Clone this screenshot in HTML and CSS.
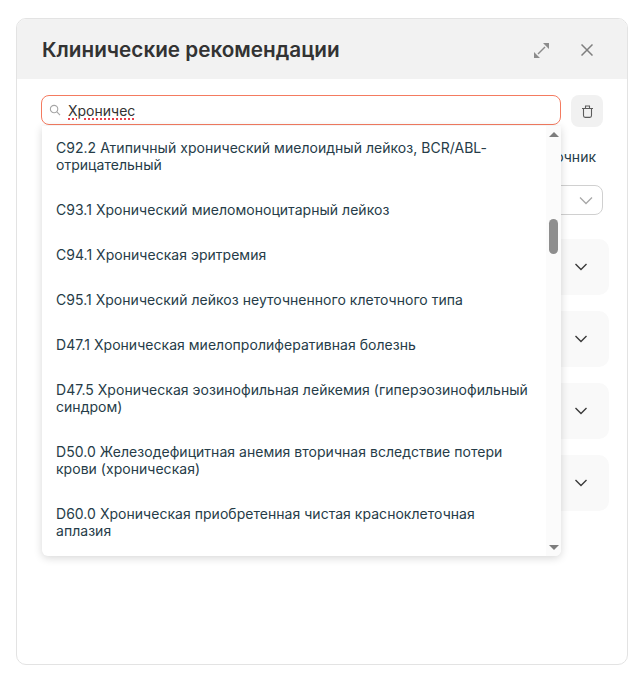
FILE: index.html
```html
<!DOCTYPE html>
<html lang="ru">
<head>
<meta charset="utf-8">
<title>Клинические рекомендации</title>
<link rel="stylesheet" href="styles.css">
</head>
<body>
<section class="card">
  <header class="head">
    <h1 class="title">Клинические рекомендации</h1>
    <div class="head-actions">
      <svg class="ico" width="15" height="15" viewBox="0 0 15 15" fill="none" stroke="#8c8c8c" stroke-width="1.5"><path d="M4 11l7-7"/><path d="M9 0h6v6zM0 9v6h6z" fill="#8c8c8c" stroke="none"/></svg>
      <svg class="ico" width="12" height="12" viewBox="0 0 12 12" fill="none" stroke="#7f7f7f" stroke-width="1.5"><path d="M.5.5l11 11M11.500.5l-11 11"/></svg>
    </div>
  </header>
  <div class="body">
    <div class="search-row">
      <div class="search-wrap">
        <div class="search">
          <svg width="12" height="12" viewBox="0 0 13 13" fill="none" stroke="#a6a6a6" stroke-width="1.2"><circle cx="5.500" cy="5.500" r="4"/><path d="M8.500 8.500 12 12"/></svg>
          <span class="query">Хроничес</span>
        </div>
        <div class="dropdown">
          <ul class="list">
            <li>C92.2 Атипичный хронический миелоидный лейкоз, BCR/ABL-отрицательный</li>
            <li>C93.1 Хронический миеломоноцитарный лейкоз</li>
            <li>C94.1 Хроническая эритремия</li>
            <li>C95.1 Хронический лейкоз неуточненного клеточного типа</li>
            <li>D47.1 Хроническая миелопролиферативная болезнь</li>
            <li>D47.5 Хроническая эозинофильная лейкемия (гиперэозинофильный синдром)</li>
            <li>D50.0 Железодефицитная анемия вторичная вследствие потери крови (хроническая)</li>
            <li>D60.0 Хроническая приобретенная чистая красноклеточная аплазия</li>
          </ul>
          <div class="scrollbar">
            <span class="arrow up"></span>
            <span class="thumb"></span>
            <span class="arrow down"></span>
          </div>
        </div>
      </div>
      <button class="trash" type="button" aria-label="Очистить">
        <svg width="11" height="13" viewBox="0 0 11 13" fill="none" stroke="#5c5c5c" stroke-width="1.1"><path d="M0 3.500h11M3.500 3.500V1h4v2.500M1.500 4v6.500c0 1 .6 1.900 1.600 1.900h4.800c1 0 1.600-.9 1.600-1.900V4"/></svg>
      </button>
    </div>
    <div class="label">Справочник</div>
    <div class="select">
      <svg width="16" height="9" viewBox="0 0 16 9" fill="none" stroke="#a8a8a8" stroke-width="1.3"><path d="M2 1.500 8 7.500l6-6"/></svg>
    </div>
    <div class="accordions">
      <div class="acc"><svg width="14" height="8" viewBox="0 0 14 8" fill="none" stroke="#3a3a3a" stroke-width="1.4"><path d="M1.500 1 7 6.500 12.500 1"/></svg></div>
      <div class="acc"><svg width="14" height="8" viewBox="0 0 14 8" fill="none" stroke="#3a3a3a" stroke-width="1.4"><path d="M1.500 1 7 6.500 12.500 1"/></svg></div>
      <div class="acc"><svg width="14" height="8" viewBox="0 0 14 8" fill="none" stroke="#3a3a3a" stroke-width="1.4"><path d="M1.500 1 7 6.500 12.500 1"/></svg></div>
      <div class="acc"><svg width="14" height="8" viewBox="0 0 14 8" fill="none" stroke="#3a3a3a" stroke-width="1.4"><path d="M1.500 1 7 6.500 12.500 1"/></svg></div>
    </div>
  </div>
</section>
</body>
</html>
```

FILE: styles.css
```css
* { box-sizing: border-box; }
html, body { margin: 0; background: #fff; }
body {
  width: 642px;
  height: 682px;
  padding: 18px 14px 17px 16px;
  font-family: Inter, "Noto Sans", sans-serif;
  color: #2f3a40;
  overflow: hidden;
}
.card {
  height: 647px;
  border: 1px solid #e3e3e3;
  border-radius: 10px;
  overflow: hidden;
  background: #fff;
}
.head {
  height: 60px;
  background: #f2f2f2;
  display: flex;
  align-items: center;
  justify-content: space-between;
  padding: 2px 34px 0 25px;
}
.title {
  margin: 0;
  font-size: 20.7px;
  line-height: 26px;
  font-weight: 600;
  color: #333;
}
.head-actions { display: flex; align-items: center; gap: 32px; }
.ico { display: block; }
.body { padding: 16px 24px 0 24px; }
.search-row { display: flex; gap: 10px; align-items: flex-start; }
.search-wrap { position: relative; flex: 1; }
.search {
  height: 30px;
  border: 1px solid #f47b60;
  border-radius: 8px;
  display: flex;
  align-items: center;
  gap: 7px;
  padding: 0 7px;
  background: #fff;
}
.query {
  font-size: 14px;
  color: #333;
  text-decoration: underline dotted #e8404a 1.5px;
  text-underline-offset: 3px;
}
.dropdown {
  position: absolute;
  top: 31px;
  left: 1px;
  right: 0;
  height: 430px;
  display: flex;
  background: #fff;
  border-radius: 0 0 6px 6px;
  box-shadow: 0 2px 8px rgba(0, 0, 0, .16);
  overflow: hidden;
  z-index: 2;
}
.list {
  flex: 1;
  list-style: none;
  margin: 0;
  padding: 0;
  font-size: 14px;
  line-height: 17px;
  letter-spacing: .03px;
  color: #263c48;
}
.list li { padding: 14px; }
.list li:first-child { padding-top: 13px; }
.scrollbar {
  width: 15px;
  flex: none;
  background: #fbfbfb;
  display: flex;
  flex-direction: column;
  align-items: center;
  padding: 6px 0;
}
.arrow { width: 0; height: 0; border-left: 5px solid transparent; border-right: 5px solid transparent; }
.arrow.up { border-bottom: 5px solid #7d7d7d; }
.arrow.down { border-top: 5px solid #7d7d7d; margin-top: auto; }
.thumb { width: 9px; height: 35px; margin-top: 82px; border-radius: 5px; background: #8e8e8e; }
.trash {
  width: 32px;
  height: 32px;
  border: 0;
  padding: 0;
  border-radius: 8px;
  background: #f1f1f1;
  display: flex;
  align-items: center;
  justify-content: center;
  flex: none;
}
.label {
  margin-top: 21px;
  padding-right: 7px;
  text-align: right;
  font-size: 14px;
  line-height: 18px;
  color: #263c48;
}
.select {
  margin: 19px 0 0 2px;
  height: 30px;
  border: 1px solid #d0d0d0;
  border-radius: 8px;
  display: flex;
  align-items: center;
  justify-content: flex-end;
  padding-right: 8px;
}
.accordions {
  margin: 24px -6px 0 2px;
  display: flex;
  flex-direction: column;
  gap: 16px;
}
.acc {
  height: 56px;
  background: #f9f9f9;
  border-radius: 10px;
  display: flex;
  align-items: center;
  justify-content: flex-end;
  padding-right: 21px;
}
```
